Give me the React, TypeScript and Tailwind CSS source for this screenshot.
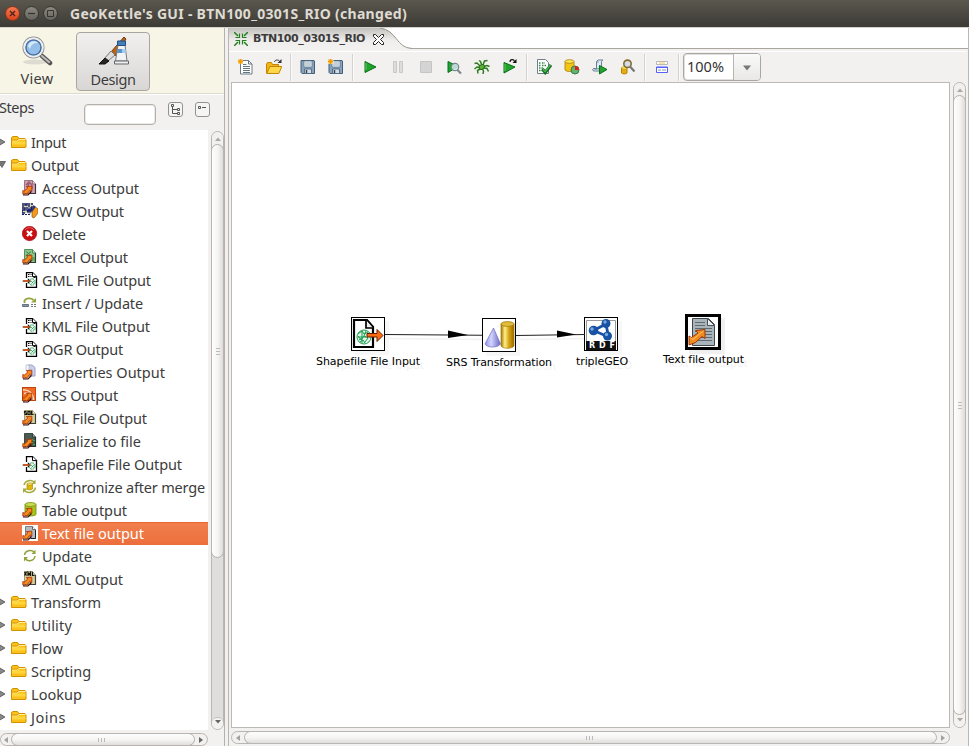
import { useLayoutEffect, useRef, useState, type ReactNode } from "react";

/** Text tracked so that its run takes the given width. */
function Fit({ text, width, className = "" }: { text: string; width: number; className?: string }) {
  const ref = useRef<HTMLSpanElement>(null);
  const [gap, setGap] = useState(0);
  useLayoutEffect(() => {
    if (!ref.current) return;
    const natural = ref.current.getBoundingClientRect().width - gap * text.length;
    setGap((width - natural) / text.length);
  }, [text, width]);
  return (
    <span ref={ref} style={{ letterSpacing: gap }} className={`inline-block whitespace-nowrap ${className}`}>
      {text}
    </span>
  );
}

function Icon({ children, className = "h-4 w-4", box = "0 0 16 16" }: { children: ReactNode; className?: string; box?: string }) {
  return (
    <svg viewBox={box} className={`block shrink-0 ${className}`} fill="none">
      {children}
    </svg>
  );
}

const Folder = () => (
  <Icon>
    <path d="M.5 13.500V3.500L2 2.500h4.500L8 4.500h6l1 1.500v7l-1 .5z" fill="#fcc21b" stroke="#d19000" />
    <path d="M1 7h5.500L8 5.500h6.500" stroke="#fff0a0" />
    <path d="M1 6h5L7.500 4.500" stroke="#d99a08" />
    <path d="M1 7.500h13.500v3H1z" fill="#ffdf4d" opacity=".7" />
  </Icon>
);

const Arrow = () => (
  <>
    <path d="M1 14.800l5 .2 3-3v-1" stroke="#3a0d05" strokeWidth="1.200" />
    <path d="M.8 14V10.500l1.500.6L5.800 8 4.300 6.500l5.500-.3v5l-1.600-1.200L4.800 14l-2-.8z" fill="#f78a1c" stroke="#a32a08" strokeWidth=".8" />
  </>
);

const SheetOut = ({ fill, edge, children }: { fill: string; edge: string; children?: ReactNode }) => (
  <Icon>
    <path d="M2.500.500h8l3 3.500v9.500h-11z" fill={fill} stroke={edge} strokeWidth=".8" />
    <path d="M10.500.500V4h3" fill="#fff" fillOpacity=".5" stroke={edge} strokeWidth=".8" />
    <path d="M8 13.500h5.500V4" stroke="#222" opacity=".75" strokeWidth="1.200" />
    {children}
    <Arrow />
  </Icon>
);

const GeoOut = ({ marks }: { marks?: boolean }) => (
  <Icon>
    <path d="M4.500 6V.600h6l4 4v10.800h-10V11" fill="#fff" stroke="#000" strokeWidth="1.300" />
    <path d="M10.500.600v4h4" fill="#fff" stroke="#000" />
    {marks && <path d="M6 2.500h1.500M8.500 2.500h1M6 4.500h1.500M8.500 4.500h1M11.500 5.500h2" stroke="#111" strokeWidth="1.200" />}
    <circle cx="10" cy="10" r="3.200" fill="#e2f6e9" stroke="#27a05b" strokeDasharray="1.800 .7" />
    <path d="M9 9l2.500 2.500m-2 0L12 9" stroke="#27a05b" strokeWidth=".8" />
    <path d="M.8 8.200h5V6.200L9 9l-3.200 2.800v-2h-5z" fill="#111" />
    <path d="M1 9h7" stroke="#ff6a1a" strokeWidth="1.300" />
  </Icon>
);

const icons: Record<string, ReactNode> = {
  folder: <Folder />,
  access: (
    <SheetOut fill="#cfa0ae" edge="#8a5a6a"><path d="M4 5l3-3 3 3v4M7 2l-1 5" stroke="#9a5a78" strokeWidth="1.500" /></SheetOut>
  ),
  csw: (
    <Icon>
      <path d="M0 0h11v10H0z" fill="#d8d8a8" />
      <path d="M1 0v4M3 0v2h2V0M7 0v4M9 1h2M0 5h3v2H0v3h3M5 4v3l1 2 1-3 1 3 1-3V4M10 3v6" stroke="#141e70" strokeWidth="1.400" />
      <path d="M0 11.500h8" stroke="#141e70" strokeDasharray="2 1" />
      <path d="M11.500 2l2.500 2v8l-4 1V7z" fill="#1e2c80" />
      <path d="M10 9l3.500-5L16 6v4l-4 5-2-1z" fill="#f09a20" stroke="#9a5508" strokeWidth=".7" />
    </Icon>
  ),
  delete: (
    <Icon>
      <circle cx="7.500" cy="7.500" r="7.200" fill="#c90d12" stroke="#980509" strokeWidth=".6" />
      <path d="M3 4c2-3 7-3 9 0" stroke="#e9666a" />
      <path d="M5 5l5 5m0-5l-5 5" stroke="#fff" strokeWidth="2.200" />
    </Icon>
  ),
  excel: (
    <SheetOut fill="#8cc68a" edge="#3b7a42"><path d="M4 2.500l5 4m0-4l-5 4M9 9h4M9 11h4" stroke="#3d8a45" /></SheetOut>
  ),
  geo: <GeoOut marks />,
  shape: <GeoOut />,
  insert: (
    <Icon>
      <path d="M2.500 8V5.500C4 3 9 2.500 11.500 5" stroke="#93a43e" strokeWidth="1.800" />
      <path d="M9 7.500h5V3z" fill="#93a43e" />
      <path d="M.5 9.500h6v2h-6z" fill="#8598ad" stroke="#66727f" />
      <path d="M9 9.500h2m1 0h2M9 11.500h2m1 0h2" stroke="#777" />
    </Icon>
  ),
  properties: (
    <Icon>
      <path d="M6 1h4l3 2.500V12H6z" fill="#c9cfec" stroke="#9aa1c5" />
      <path d="M4 6V1h3v8" fill="#f8f8ff" stroke="#aaa" strokeWidth=".6" />
      <Arrow />
    </Icon>
  ),
  rss: (
    <Icon>
      <rect x=".5" y=".5" width="13" height="13" fill="#ed6a20" stroke="#bf4510" />
      <path d="M1 3c5.500-1 10.500 3.500 10.500 10M2 6.500C6 5 9.500 8 9.500 12" stroke="#ffe6d6" strokeWidth="1.400" />
      <Arrow />
    </Icon>
  ),
  sql: (
    <SheetOut fill="#d5cf9a" edge="#8a855a">
      <path d="M4.500 1.500H2.500v1.500h2v1.500h-2M6 1.500h2v3H6zM9.500 1v3.500h2" stroke="#151510" strokeWidth="1.200" />
    </SheetOut>
  ),
  serialize: (
    <SheetOut fill="#4a5b52" edge="#26302b"><path d="M10 6v1m2 0v1m-2 1v1m2 1v1" stroke="#2ed04a" strokeWidth="1.500" /></SheetOut>
  ),
  sync: (
    <Icon>
      <path d="M2 6C3 1.500 9 0 12 3M13.500 8.500c-1 5-7.500 6.500-11 3" stroke="#a3ad3c" strokeWidth="1.500" />
      <path d="M13.500.500v4.500H9.500zM1 14V9.500h4.500z" fill="#a3ad3c" />
      <path d="M5 5v5c1 1.200 4.500 1.200 5.500 0V5z" fill="#dfb600" stroke="#a08000" strokeWidth=".6" />
      <ellipse cx="7.750" cy="5" rx="2.750" ry="1.200" fill="#ffe86b" stroke="#a08000" strokeWidth=".6" />
    </Icon>
  ),
  table: (
    <Icon>
      <path d="M3 2.500v10c2 2 9 2 11 0v-10z" fill="#a9c41e" stroke="#718a10" strokeWidth=".8" />
      <ellipse cx="8.500" cy="2.500" rx="5.500" ry="2" fill="#c8dc50" stroke="#718a10" strokeWidth=".8" />
      <Arrow />
    </Icon>
  ),
  text: (
    <Icon>
      <path d="M0 0h16v16H0z" fill="#fff" />
      <path d="M3.500 1.500h7l3 3v9h-10z" fill="#b3bac0" stroke="#62686d" strokeWidth=".8" />
      <path d="M10.500 1.500v3h3" fill="#fff" stroke="#62686d" /><path d="M9 13.500h4.500V5" stroke="#222" />
      <Arrow />
    </Icon>
  ),
  update: (
    <Icon>
      <path d="M2.500 7c.5-4.500 6.500-6 9.500-3M13 8c-.5 5-7 6-9.500 3" stroke="#8ea33b" strokeWidth="1.500" />
      <path d="M13.500 1.500V6H9.500zM2 13.500V9h4z" fill="#8ea33b" />
    </Icon>
  ),
  xml: (
    <SheetOut fill="#d5cf9a" edge="#8a855a">
      <path d="M2.500 1l2 3.500m0-3.500l-2 3.500M6 5V1.500l1.250 2 1.250-2V5M10.500 1v3.500h2" stroke="#151510" strokeWidth="1.200" />
    </SheetOut>
  ),
};

type Row = { name: string; w: number; icon: string; state?: "closed" | "open" | "selected" };
const rows: Row[] = [
  { name: "Input", w: 35, icon: "folder", state: "closed" },
  { name: "Output", w: 48, icon: "folder", state: "open" },
  { name: "Access Output", w: 97, icon: "access" },
  { name: "CSW Output", w: 82, icon: "csw" },
  { name: "Delete", w: 44, icon: "delete" },
  { name: "Excel Output", w: 86, icon: "excel" },
  { name: "GML File Output", w: 109, icon: "geo" },
  { name: "Insert / Update", w: 101, icon: "insert" },
  { name: "KML File Output", w: 108, icon: "geo" },
  { name: "OGR Output", w: 81, icon: "geo" },
  { name: "Properties Output", w: 123, icon: "properties" },
  { name: "RSS Output", w: 76, icon: "rss" },
  { name: "SQL File Output", w: 105, icon: "sql" },
  { name: "Serialize to file", w: 99, icon: "serialize" },
  { name: "Shapefile File Output", w: 140, icon: "shape" },
  { name: "Synchronize after merge", w: 163, icon: "sync" },
  { name: "Table output", w: 85, icon: "table" },
  { name: "Text file output", w: 102, icon: "text", state: "selected" },
  { name: "Update", w: 50, icon: "update" },
  { name: "XML Output", w: 81, icon: "xml" },
  { name: "Transform", w: 70, icon: "folder", state: "closed" },
  { name: "Utility", w: 41, icon: "folder", state: "closed" },
  { name: "Flow", w: 32, icon: "folder", state: "closed" },
  { name: "Scripting", w: 60, icon: "folder", state: "closed" },
  { name: "Lookup", w: 51, icon: "folder", state: "closed" },
  { name: "Joins", w: 35, icon: "folder", state: "closed" },
];

function TreeRow({ row }: { row: Row }) {
  const isFolder = row.icon === "folder";
  const selected = row.state === "selected";
  return (
    <li
      className={`flex h-[23px] items-start ${
        selected ? "bg-linear-to-b from-[#f17f4e] to-[#ec6f3c] text-white shadow-[inset_0_1px_0_#e9672f]" : "text-[#3c3c3c]"
      }`}
    >
      {isFolder ? (
        <Icon className="mt-[6px] mr-[4px] h-[10px] w-[6px]" box="0 0 6 10">
          {row.state === "open" ? (
            <path d="M-2 1.500h7.500L2 7.500z" fill="#777" stroke="#555" strokeWidth=".8" />
          ) : (
            <path d="M-1 1.500L5 5l-6 3.500z" fill="#888" stroke="#555" strokeWidth=".8" />
          )}
        </Icon>
      ) : (
        <span className="w-[21px]" />
      )}
      <span className={isFolder ? "mt-[3px] mr-[4px] ml-px" : "mt-[3px] mr-[4px] ml-px"}>{icons[row.icon]}</span>
      <Fit text={row.name} width={row.w} className="leading-[22px]" />
    </li>
  );
}

function VBar({ thumb, rest, active }: { thumb: string; rest?: boolean; active?: boolean }) {
  return (
    <div className="flex w-[13px] flex-col overflow-hidden rounded-[7px] border border-[#b9b6b1] bg-[#dfdedd]">
      <div className="-mb-[5px] flex h-[17px] shrink-0 items-start justify-center bg-[#f1f0ef] pt-[5px]">
        <Icon className="h-[4px] w-[6px]" box="0 0 6 4"><path d="M0 4l3-3.500L6 4z" fill="#aaa8a5" /></Icon>
      </div>
      <div className={`-mx-px flex items-center justify-center rounded-[7px] border border-[#b3b0ab] bg-linear-to-r from-[#fefefe] via-[#f6f5f4] to-[#dedcda] ${thumb}`}>
        <span className="flex flex-col gap-[2px]">
          <i className="h-px w-[4px] bg-[#bbb]" /><i className="h-px w-[4px] bg-[#bbb]" /><i className="h-px w-[4px] bg-[#bbb]" />
        </span>
      </div>
      {rest && <div className="flex-1" />}
      <div className={`flex shrink-0 items-end justify-center bg-[#f3f2f1] pb-[5px] ${rest ? "h-[12px] rounded-t-[5px] border-t border-[#c4c1bd]" : "-mt-[5px] h-[17px]"}`}>
        <Icon className="h-[4px] w-[6px]" box="0 0 6 4"><path d="M0 0h6L3 3.500z" fill={active ? "#666" : "#aaa8a5"} /></Icon>
      </div>
    </div>
  );
}

function HBar({ left, active }: { left: string; active?: boolean }) {
  return (
    <div className="flex h-[13px] w-full overflow-hidden rounded-[7px] border border-[#b9b6b1] bg-[#f2f1f0]">
      <div className={`flex shrink-0 items-center justify-center ${left}`}>
        <Icon className="h-[6px] w-[4px]" box="0 0 4 6"><path d="M4 0v6L0 3z" fill="#a3a19e" /></Icon>
      </div>
      <div className="-my-px flex flex-1 items-center justify-center gap-[2px] rounded-[7px] border border-[#b3b0ab] bg-linear-to-b from-[#fdfdfd] via-[#f6f5f4] to-[#e0dedc] pr-[3px]">
        <i className="h-[4px] w-px bg-[#bbb]" /><i className="h-[4px] w-px bg-[#bbb]" /><i className="h-[4px] w-px bg-[#bbb]" />
      </div>
      <div className="flex w-[12px] shrink-0 items-center justify-center">
        <Icon className="h-[6px] w-[4px]" box="0 0 4 6"><path d="M0 0v6l4-3z" fill={active ? "#666" : "#a3a19e"} /></Icon>
      </div>
    </div>
  );
}

const Tool = ({ children }: { children: ReactNode }) => (
  <button className="flex h-7 w-7 items-center justify-center"><Icon>{children}</Icon></button>
);
const Sep = () => (
  <span className="flex h-[27px] w-[6px] justify-center"><i className="w-px bg-[#d5d2cf]" /><i className="w-px bg-[#fafafa]" /></span>
);
const Star = () => (
  <>
    <path d="M.5.500l4 4m0-4l-4 4" stroke="#f3b51b" strokeWidth="1.200" />
    <path d="M2.500 0v5M0 2.500h5" stroke="#f39a0b" strokeWidth="1.500" />
  </>
);
const Play = ({ d = "M2.500 2.500l11 5.500-11 5.500z" }: { d?: string }) => <path d={d} fill="#1fa32b" stroke="#087018" />;
const Disk = () => (
  <>
    <path d="M1 1.500h13l.5.5v12.500H2l-1-1z" fill="#87a2ba" stroke="#42607c" />
    <path d="M4 2h8v6H4z" fill="#eff4f7" stroke="#56728c" strokeWidth=".7" />
    <path d="M5 4h6M5 6h6" stroke="#9aacba" />
    <path d="M4.500 10h7v4.500h-7z" fill="#d5dde3" stroke="#42607c" strokeWidth=".8" />
    <path d="M6.500 11v3" stroke="#345" strokeWidth="1.500" />
  </>
);

function Toolbar() {
  return (
    <div className="flex h-[30px] items-center pl-[3px]">
      <Tool>
        <path d="M2.500 1.500h8l3.500 3.500v10H2.500z" fill="#fff" stroke="#6d7d86" />
        <path d="M10.500 1.500V5H14M5 5.500h3.500M5 7.500h7m-7 2h7m-7 2h7m-7 2h7" stroke="#65757e" />
        <path d="M0 0h5v5H0z" fill="#f2f1f0" />
        <Star />
      </Tool>
      <Tool>
        <path d="M.5 14v-9l1-1.500h4l1 2h6V14z" fill="#f1b51a" stroke="#c58400" />
        <path d="M.8 14.500l3-7h12l-3 7z" fill="#ffd94a" stroke="#c58400" />
        <path d="M8.500 3C9 .5 12 .5 13.500 2" stroke="#333" /><path d="M11.500 4H15.500V0z" fill="#333" />
      </Tool>
      <Sep />
      <Tool><Disk /></Tool>
      <Tool><Disk /><path d="M0 0h5.500v5H0z" fill="#f2f1f0" /><Star /></Tool>
      <Sep />
      <Tool><Play d="M3 2.500l11 5.500L3 13.500z" /><path d="M4 4v7" stroke="#66c66a" /></Tool>
      <Tool><path d="M3.500 2.500h3v11h-3zM9.500 2.500h3v11h-3z" fill="#ddd" stroke="#c8c8c8" /></Tool>
      <Tool><path d="M2.500 2.500h11v11h-11z" fill="#d4d4d4" stroke="#c5c5c5" /></Tool>
      <Tool>
        <Play d="M2 2.500l10 5-10 6z" />
        <circle cx="9" cy="8" r="3.700" fill="#d5e8ed" fillOpacity=".85" stroke="#758590" strokeWidth="1.200" />
        <path d="M11.500 11l3.500 3.500" stroke="#80868a" strokeWidth="2.200" />
      </Tool>
      <Tool>
        <path d="M.5 4.500L3 4l3 3M5 1.500l1.500 1L8 7m1-1l1.500-4 3-.5M10 7.500l3-1 2.500 1M10 9l3 .5 1.500 3M8.500 10l1 2-.5 3M6 10l-2.500 1.500.5 3M5.500 8.500L3 8 .5 10" stroke="#2d7d1e" strokeWidth="1.500" />
        <ellipse cx="7.800" cy="8" rx="2.800" ry="2.200" fill="#5db138" stroke="#286e18" transform="rotate(-35 7.800 8)" />
      </Tool>
      <Tool>
        <Play d="M2 3.500L13 8 2 14z" /><path d="M3 5v7" stroke="#66c66a" />
        <path d="M8 3c0-3 4-3 4.500-.5" stroke="#111" strokeWidth="1.200" /><path d="M10.500 4h4V0z" fill="#111" />
      </Tool>
      <Sep />
      <Tool>
        <path d="M1.500.500h8l3 3v11h-11z" fill="#fff" stroke="#71808a" />
        <path d="M3 4h2m1 0h3M3 6.500h2m1 0h4M3 9h4M3 11.500h3" stroke="#348744" strokeWidth="1.300" strokeDasharray="1.500 1" />
        <path d="M6.500 10l2.700 3.500 5.800-7.500" stroke="#126b22" strokeWidth="3.200" /><path d="M7 10.200l2.200 2.500L14.500 6" stroke="#4eb856" strokeWidth="1.300" />
      </Tool>
      <Tool>
        <path d="M1 2.500V11c2 2 7.500 2 9 0V2.500z" fill="#f3c414" stroke="#a77c00" strokeWidth=".8" />
        <ellipse cx="5.500" cy="2.500" rx="4.500" ry="1.800" fill="#ffe858" stroke="#a77c00" strokeWidth=".8" />
        <circle cx="11" cy="11" r="4" fill="#62b36b" stroke="#3b7c42" /><path d="M11 11V7a4 4 0 014 4z" fill="#df201c" />
      </Tool>
      <Tool>
        <path d="M4.500 10V2.500L6 1h5l-1.500 1.500V12h-8L.5 10.500l1-1z" fill="#dfe9f1" stroke="#668199" />
        <path d="M1.500 9.800H7M4.500 3h2" stroke="#668199" /><Play d="M7.500 6.500l7.500 4-7.500 4.500z" />
      </Tool>
      <Tool>
        <path d="M1.500 9v5c1 1.200 4.500 1.200 5.500 0V9z" fill="#e2ad15" stroke="#b88100" />
        <ellipse cx="4.200" cy="9" rx="2.700" ry="1.200" fill="#fff063" stroke="#b88100" strokeWidth=".6" />
        <circle cx="7.500" cy="4.800" r="3.700" fill="#c5d4e0" fillOpacity=".7" stroke="#856b31" strokeWidth="1.600" />
        <path d="M10 7.500l4.500 5" stroke="#777" strokeWidth="2.200" />
      </Tool>
      <Sep />
      <Tool>
        <path d="M2.500 2.500h11v3h-11z" fill="#fff" stroke="#b8b8b8" /><path d="M5 4h6" stroke="#f0c35a" />
        <path d="M2.500 8h11v5.500h-11z" fill="#fff" stroke="#5461ff" /><path d="M2.500 8.500h11" stroke="#5461ff" /><path d="M4 11h3m1 0h4" stroke="#8d98a8" />
      </Tool>
      <Sep />
      <div className="ml-px flex h-[28px] w-[78px] rounded-[4px] border border-[#aaa7a3] bg-white shadow-[inset_0_0_0_1px_#e2e0de]">
        <div className="flex w-[50px] items-center border-r border-[#b8b5b1] pl-[3px] text-[#333]"><Fit text="100%" width={37} /></div>
        <button className="flex flex-1 items-center justify-center rounded-r-[3px] bg-linear-to-b from-[#fafafa] to-[#e9e8e7]">
          <Icon className="mt-px h-[6px] w-[8px]" box="0 0 8 6"><path d="M0 .5h8L4 5.500z" fill="#777" /></Icon>
        </button>
      </div>
    </div>
  );
}

function NodeLabel({ text, w, pos }: { text: string; w: number; pos: string }) {
  return (
    <div className={`absolute font-['DejaVu_Sans'] text-[11px] leading-[14px] text-black [text-shadow:4px_4px_0_#f2f2f2] ${pos}`}>
      <Fit text={text} width={w} />
    </div>
  );
}

function Diagram() {
  return (
    <div className="relative min-w-0 flex-1 border border-[#bdbab5] bg-white">
      <div className="absolute top-[234px] left-[119px] h-[34px] w-[34px] border border-black bg-white shadow-[4px_4px_0_#f7f7f7]">
        <Icon className="h-8 w-8" box="0 0 32 32">
          <path d="M2 2h13l6 7v20H2z" fill="#fff" stroke="#000" strokeWidth="2.200" />
          <path d="M14 2v8h7" fill="#eee" stroke="#000" strokeWidth="1.700" />
          <circle cx="12" cy="19" r="7" fill="#e0f5e8" stroke="#1b9a4e" />
          <path d="M6 16l4-3 2 3 4-2m-10 4l3 4 3-4 4 2-3 4M7 22l3-2m4-7l-2 5m-4 6l3-2 2 3M6 19h8m-4-6v12" stroke="#1b9a4e" strokeWidth="1" />
          <path d="M15 15.500h10V11.500l6 6-6 6v-4.500H15z" fill="#ff6b13" stroke="#622100" />
        </Icon>
      </div>
      <div className="absolute top-[235px] left-[250px] h-[34px] w-[34px] border border-black bg-white shadow-[4px_4px_0_#f7f7f7]">
        <Icon className="h-8 w-8" box="0 0 32 32">
          <defs>
            <linearGradient id="gold"><stop stopColor="#a07500" /><stop offset=".3" stopColor="#fff08b" /><stop offset=".6" stopColor="#d9a514" /><stop offset="1" stopColor="#9a6a00" /></linearGradient>
            <linearGradient id="cone"><stop stopColor="#9090ee" /><stop offset=".4" stopColor="#d4d4ff" /><stop offset="1" stopColor="#6868c8" /></linearGradient>
          </defs>
          <path d="M18 5v22c2 3 11 3 13 0V5z" fill="url(#gold)" stroke="#a97800" strokeWidth=".7" />
          <ellipse cx="24.500" cy="5" rx="6.500" ry="2.400" fill="#dfbc3e" stroke="#a07500" strokeWidth=".7" />
          <path d="M10.500 9L2 25c2 4 13 4 15.500 0z" fill="url(#cone)" stroke="#7778c5" strokeWidth=".8" />
        </Icon>
      </div>
      <div className="absolute top-[234px] left-[352px] h-[34px] w-[34px] border border-black bg-white shadow-[4px_4px_0_#f7f7f7]">
        <Icon className="h-8 w-8" box="0 0 32 32">
          <path d="M1.500 2.500h29v28h-29z" stroke="#999" /><path d="M1 23h30v9H1z" fill="#111" />
          <path d="M21 6L8.500 12.500l15 6.500z" stroke="#1852a4" strokeWidth="2.800" />
          <g fill="#1852a4"><circle cx="21" cy="5.500" r="4.500" /><circle cx="8.500" cy="12.500" r="4.800" /><circle cx="22.500" cy="18" r="4.500" /></g>
          <g fill="#79a7df"><circle cx="20" cy="4" r="1.700" /><circle cx="7" cy="11" r="1.800" /><circle cx="21.500" cy="16.500" r="1.700" /></g>
          <text x="4" y="30.200" fill="#fff" fontFamily="DejaVu Sans" fontWeight="bold" fontSize="8" textLength="26">RDF</text>
        </Icon>
      </div>
      <div className="absolute top-[231px] left-[453px] h-[36px] w-[36px] border-[3px] border-black bg-white shadow-[4px_4px_0_#f0f0f0]">
        <Icon className="h-[30px] w-[30px]" box="0 0 30 30">
          <path d="M4.500 1.500h16l6 6v21h-22z" fill="#a9b3ba" stroke="#3e464c" />
          <path d="M19.500 1.500v7h7z" fill="#e9edf0" stroke="#4a5257" />
          <path d="M7 5.500h10m-10 3h10m-10 3h17m-17 3h17m-17 3h17m-17 3h17m-17 3h17" stroke="#606a72" />
          <path d="M1 28V19l2.500 1.500L10 16l-2.500-2.500 9.500-1v9l-3-2-6.500 6z" fill="#f28b1d" stroke="#9a3607" />
          <path d="M2 20.500l3 2 6.500-5.500 4-3" stroke="#ffc26a" />
        </Icon>
      </div>
      <svg className="absolute top-[234px] left-[153px] h-[34px] w-[200px]" viewBox="385 317 200 34" fill="none">
        <path d="M389 338.500l93 1M520 339.500l64-1" stroke="#f2f2f2" strokeWidth="1.500" />
        <path d="M385 334.500l97 .8M516 335.500l69-1" stroke="#222" strokeWidth="1.100" />
        <path d="M448 330.500l20 4.500-20 3zM557 330.500l19 4-19 3z" fill="#000" />
      </svg>
      <NodeLabel text="Shapefile File Input" w={104} pos="left-[84px] top-[272px]" />
      <NodeLabel text="SRS Transformation" w={106} pos="left-[214px] top-[273px]" />
      <NodeLabel text="tripleGEO" w={52} pos="left-[344px] top-[272px]" />
      <NodeLabel text="Text file output" w={81} pos="left-[431px] top-[270px]" />
    </div>
  );
}

const winButton = "flex h-[15px] w-[15px] items-center justify-center rounded-full border";

export default function App() {
  return (
    <div className="flex h-[746px] w-[969px] flex-col overflow-hidden bg-[#f2f1f0] font-['Noto_Sans',sans-serif] text-[14.5px] text-[#3c3c3c]">
      <header className="flex h-[27px] shrink-0 items-center bg-linear-to-b from-[#5a574e] to-[#3d3b36] pl-[5px]">
        <div className="flex gap-[4px]">
          <button className={`${winButton} border-[#8c3519] bg-linear-to-b from-[#f5784f] to-[#dc431a]`}>
            <Icon className="h-[7px] w-[7px]" box="0 0 7 7"><path d="M1 1l5 5m0-5L1 6" stroke="#4a241a" strokeWidth="1.300" /></Icon>
          </button>
          <button className={`${winButton} border-[#383631] bg-linear-to-b from-[#8b8981] to-[#65635c]`}>
            <Icon className="h-[7px] w-[7px]" box="0 0 7 7"><path d="M0 3.500h7" stroke="#36342f" strokeWidth="1.200" /></Icon>
          </button>
          <button className={`${winButton} border-[#383631] bg-linear-to-b from-[#8b8981] to-[#65635c]`}>
            <Icon className="h-[7px] w-[7px]" box="0 0 7 7"><path d="M.5.500h6v6h-6z" stroke="#36342f" /></Icon>
          </button>
        </div>
        <h1 className="ml-[12px] text-[14px] font-bold text-[#dfdbd2]"><Fit text="GeoKettle's GUI - BTN100_0301S_RIO (changed)" width={337} /></h1>
      </header>

      <div className="flex min-h-0 flex-1 border-t border-[#d6d3ce]">
        <aside className="flex w-[225px] shrink-0 flex-col border-r border-[#b5b1ac]">
          <div className="flex h-[66px] shrink-0 border-b border-[#dddad0] bg-[#f7f5e6] pt-[4px]">
            <button className="flex w-[74px] flex-col items-center">
              <Icon className="mt-[3px] h-8 w-8" box="0 0 32 32">
                <ellipse cx="14" cy="27" rx="12" ry="2.500" fill="#dedbd0" />
                <path d="M21 21l8 7" stroke="#555" strokeWidth="4.500" strokeLinecap="round" /><path d="M21 21l7 6" stroke="#bbb" strokeWidth="2.200" strokeLinecap="round" />
                <circle cx="12.500" cy="12.500" r="9" fill="#93bfe9" stroke="#85888a" strokeWidth="4" />
                <circle cx="12.500" cy="12.500" r="9.200" stroke="#eee" strokeWidth="2.200" />
                <circle cx="12.500" cy="12.500" r="7.500" stroke="#3c70ad" strokeWidth="1.200" />
                <path d="M7 11c1-5 7-6 10-3-4 0-7 1-8 6z" fill="#d7e9f9" />
              </Icon>
              <Fit text="View" width={33} className="mt-px leading-[20px]" />
            </button>
            <button className="ml-[2px] flex h-[59px] w-[74px] flex-col items-center rounded-[4px] border border-[#aaa69f] bg-linear-to-b from-[#f1f0ef] to-[#d9d7d5]">
              <Icon className="mt-[3px] h-8 w-8" box="0 0 32 32">
                <path d="M14 16L27 1l2 2-11 17z" fill="#b86415" stroke="#75380c" />
                <path d="M7 23l7-8 4 4-7 6z" fill="#ddd" stroke="#777" />
                <path d="M2 28l6-6 4 3-4 3z" fill="#252525" stroke="#111" />
                <path d="M21 9h7l2 16H18.500z" fill="#f1f3f5" stroke="#76797d" />
                <path d="M20.500 5h8v4.500h-8z" fill="#447fbd" stroke="#244f80" /><path d="M20.500 13h8l.5 4H20z" fill="#5b94cb" /><path d="M25 13h3.500l.5 4h-4z" fill="#a9cbea" />
                <path d="M17.500 25h14v3h-14z" fill="#eee" stroke="#666" />
              </Icon>
              <Fit text="Design" width={45} className="mt-px leading-[20px]" />
            </button>
          </div>
          <div className="flex h-[36px] shrink-0 items-start border-t border-white pt-px">
            <Fit text="Steps" width={35} className="-ml-px leading-[22px]" />
            <input className="mt-[8px] ml-[50px] h-[21px] w-[72px] rounded-[4px] border border-[#b4b0aa] bg-white shadow-[inset_0_0_0_1px_#ebe9e7]" />
            <button className="mt-[6px] ml-[12px] flex h-[15px] w-[15px] items-center justify-center rounded-[3px] border border-[#929292] bg-[#f5f5f4]">
              <Icon className="h-[11px] w-[11px]" box="0 0 11 11"><path d="M1.500.500h2v2h-2zM7.500 4.500h2v2h-2zM7.500 8.500h2v2h-2zM2.500 3v6.500h5M3 5.500h4.500" stroke="#555" /></Icon>
            </button>
            <button className="mt-[6px] ml-[12px] flex h-[15px] w-[15px] items-center justify-center rounded-[3px] border border-[#929292] bg-[#f5f5f4]">
              <Icon className="h-[11px] w-[11px]" box="0 0 11 11"><path d="M1.500 2.500h2v2h-2zM5 3.500h4" stroke="#555" /></Icon>
            </button>
          </div>
          <div className="flex h-[600px] shrink-0">
            <ul className="w-[208px] shrink-0 bg-white pt-px">{rows.map((r) => <TreeRow key={r.name} row={r} />)}</ul>
            <div className="ml-[3px] flex pt-px"><VBar thumb="h-[414px] shrink-0" rest active /></div>
          </div>
          <div className="mt-[3px] w-[208px]"><HBar left="w-[10px]" active /></div>
        </aside>

        <main className="ml-[3px] flex min-w-0 flex-1 flex-col border-x border-[#b9b5b0]">
          <div className="flex h-[21px] shrink-0 border-b border-[#aaa69f] bg-white">
            <div className="relative z-10 -mb-px flex h-[21px] w-[183px] shrink-0">
              <Icon className="absolute inset-0 h-[21px] w-[183px]" box="0 0 183 21">
                <defs><linearGradient id="tab" x2="0" y2="1"><stop stopColor="#c4c1bd" /><stop offset=".6" stopColor="#efeeed" /><stop offset="1" stopColor="#f2f1f0" /></linearGradient></defs>
                <path d="M0 0h151c17 2 16 20 32 20.500V21H0z" fill="url(#tab)" />
                <path d="M151 0c17 2 16 20 32 20.500" stroke="#999589" />
              </Icon>
              <div className="relative flex items-center pt-px pl-[5px]">
                <Icon className="h-[14px] w-[14px]" box="0 0 14 14">
                  <path d="M0 0l4 4m10-4l-4 4M0 14l4-4m10 4l-4-4" stroke="#23811f" strokeWidth="1.500" />
                  <path d="M5.500 1.500v4H1.500M8.500 1.500v4H12.500M5.500 12.500v-4H1.500M8.500 12.500v-4H12.500" stroke="#23811f" strokeWidth="1.200" />
                </Icon>
                <Fit text="BTN100_0301S_RIO" width={112} className="ml-[5px] font-['DejaVu_Sans'] text-[11px] font-bold" />
                <Icon className="ml-[8px] h-[11px] w-[11px]" box="0 0 11 11">
                  <path d="M.5.500h2l3 3 3-3h2v2l-3 3 3 3v2h-2l-3-3-3 3h-2v-2l3-3-3-3z" fill="#fff" stroke="#222" />
                </Icon>
              </div>
            </div>
          </div>
          <div className="mt-[2px] mr-[2px] shrink-0 border-t border-white"><Toolbar /></div>
          <div className="flex h-[646px] shrink-0 pl-[2px]">
            <Diagram />
            <div className="mr-[2px] ml-[3px] flex"><VBar thumb="flex-1 relative z-10" /></div>
          </div>
          <div className="mt-[3px] ml-[2px] w-[719px]"><HBar left="w-[12px]" /></div>
        </main>
      </div>
    </div>
  );
}
